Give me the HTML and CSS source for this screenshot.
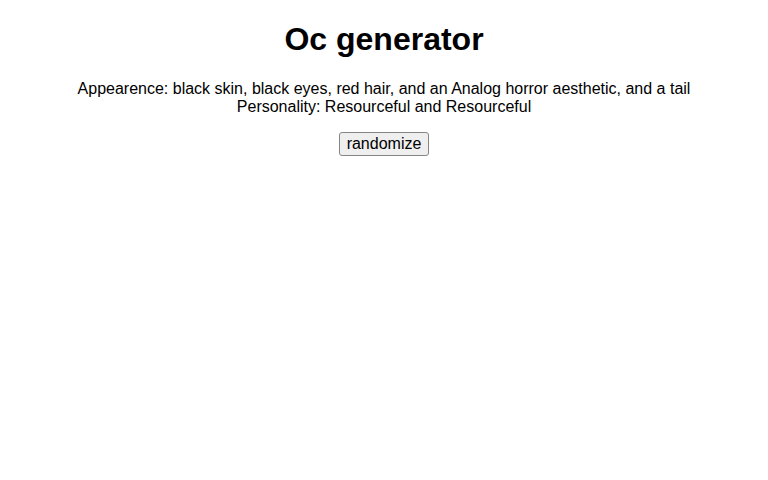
FILE: index.html
```html
<!DOCTYPE html>
<html>
<head>
<meta charset="utf-8">
<link rel="stylesheet" href="styles.css">
</head>
<body class="page">
<h1 class="title">Oc generator</h1>
<p class="desc">Appearence: black skin, black eyes, red hair, and an Analog horror aesthetic, and a tail<br>Personality: Resourceful and Resourceful</p>
<button class="btn">randomize</button>
</body>
</html>
```
FILE: styles.css
```css
html {
  margin: 0;
  padding: 0;
}
.page {
  margin: 0;
  padding: 0 8px;
  font-family: "Liberation Sans", Arial, sans-serif;
  text-align: center;
  color: #000;
  background: #fff;
}
.title {
  font-size: 32px;
  font-weight: bold;
  margin: 21.44px 0;
}
.desc {
  font-size: 16px;
  margin: 16px 0;
}
.btn {
  font-family: "Liberation Sans", Arial, sans-serif;
  font-size: 16px;
  line-height: normal;
  color: #000;
  background: #efefef;
  border: 1px solid #858585;
  border-radius: 3px;
  padding: 2px 7px;
}
```
